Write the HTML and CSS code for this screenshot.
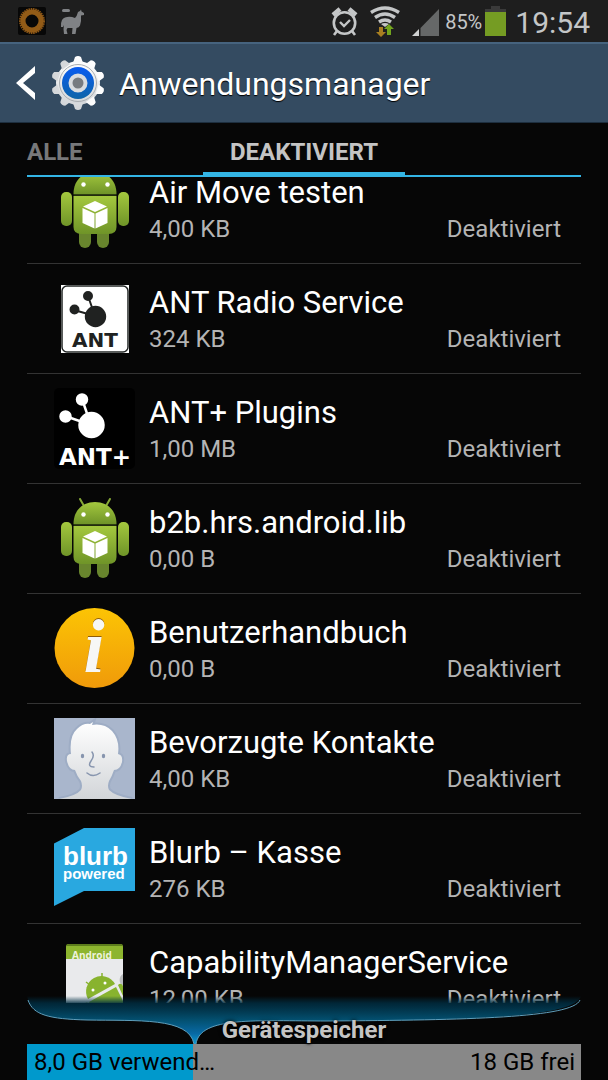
FILE: index.html
```html
<!DOCTYPE html>
<html lang="de">
<head>
    <meta charset="UTF-8">
    <meta name="viewport" content="width=device-width, initial-scale=1.0">
    <title>Anwendungsmanager</title>
    <link rel="stylesheet" href="styles.css">
</head>
<body>
    <!-- Shared shapes -->
    <svg class="defs" aria-hidden="true">
        <defs>
            <linearGradient id="robot-green" x1="0" y1="0" x2="0" y2="1">
                <stop offset="0" stop-color="#a4c83e"/>
                <stop offset="1" stop-color="#6f9428"/>
            </linearGradient>
            <linearGradient id="silver" x1="0" y1="0" x2="0" y2="1">
                <stop offset="0" stop-color="#ffffff"/>
                <stop offset="1" stop-color="#d2d5d8"/>
            </linearGradient>
            <linearGradient id="gear-blue" x1="0" y1="0" x2="0" y2="1">
                <stop offset="0" stop-color="#0a5cf0"/>
                <stop offset="1" stop-color="#0d64a8"/>
            </linearGradient>
            <linearGradient id="orange" x1="0" y1="0" x2="0" y2="1">
                <stop offset="0" stop-color="#fcc404"/>
                <stop offset="1" stop-color="#f09a0a"/>
            </linearGradient>
            <linearGradient id="funnel" x1="0" y1="0" x2="0" y2="1">
                <stop offset="0" stop-color="#003044" stop-opacity="0"/>
                <stop offset="0.15" stop-color="#002c40" stop-opacity="0.85"/>
                <stop offset="0.5" stop-color="#035070"/>
                <stop offset="0.78" stop-color="#0869a4"/>
                <stop offset="1" stop-color="#0a9bd4"/>
            </linearGradient>
            <symbol id="robot" viewBox="0 0 81 81">
                <path d="M30 8 26 1M52 8l4-7" stroke="#86a936" stroke-width="2" stroke-linecap="round"/>
                <path d="M19.500 26C19.500 12 29 4 41 4s21.500 8 21.500 22z" fill="url(#robot-green)"/>
                <rect x="7" y="24" width="11" height="34" rx="5" fill="url(#robot-green)"/>
                <rect x="64" y="24" width="11" height="34" rx="5" fill="url(#robot-green)"/>
                <rect x="25" y="58" width="12" height="22" rx="6" fill="#68852d"/>
                <rect x="43" y="58" width="12" height="22" rx="6" fill="#68852d"/>
                <path d="M19.500 28h43v31q0 7-8 7h-27q-8 0-8-7z" fill="url(#robot-green)"/>
                <path d="M19.500 26.800h43" stroke="#3c5216" stroke-width="1.300"/>
                <circle cx="29.500" cy="16.500" r="2.200" fill="#fff"/>
                <circle cx="53.500" cy="16.500" r="2.200" fill="#fff"/>
                <path d="M41 33l12 5.500-12 5.500-12-5.500zM28.500 40l12 5.500v15l-12-5.500zM53.500 40l-12 5.500v15l12-5.500z" fill="#fff"/>
            </symbol>
        </defs>
    </svg>

    <!-- Status bar -->
    <div class="status-bar">
        <svg class="status-sun" viewBox="0 0 28 28" width="28" height="28">
            <rect width="28" height="28" rx="2" fill="#070707"/>
            <circle cx="14" cy="14" r="10.500" fill="none" stroke="#8a5516" stroke-width="5" stroke-dasharray="1.400 0.600"/>
            <circle cx="14" cy="14" r="9" fill="none" stroke="#925b17" stroke-width="5"/>
        </svg>
        <svg class="status-llama" viewBox="0 0 24 25" width="24" height="25">
            <rect x="2" y="0" width="8" height="3" rx="1.500" fill="#808285"/>
            <path fill="#808285" d="M2 11Q3 9 5 8.500q5-1.500 10 .500 2-2 3-6l2-1 1-1.500.500 2 2.500 1.500v2l-3 .500q.500 6-1 10-1 2-3.500 2.500L15.500 25H12l.500-6h-5l-1 2 1 4H4l-.500-5 .500-4-1 2H1q-.500-4 1-7z"/>
        </svg>
        <span class="spacer"></span>
        <svg viewBox="0 0 27 29" width="27" height="29" fill="none" stroke="#c4c6c7">
            <circle cx="13.500" cy="16" r="10.700" stroke-width="2.600"/>
            <path d="M9 15l4 4 6-6" stroke-width="2.400"/>
            <path d="M2 8l7-6M25 8l-7-6" stroke-width="4.500"/>
            <path d="M6 24l-3 4M21 24l3 4" stroke-width="2.600"/>
        </svg>
        <svg class="status-wifi" viewBox="0 0 30 31" width="30" height="31">
            <g fill="none" stroke="#c4c6c7" stroke-width="3.400">
                <path d="M1 6.500q14-9 28 0M5 11.500q10-7 20 0M9 16q6-4 12 0"/>
            </g>
            <path d="M11 18q4-2 8 0l-4 3z" fill="#c4c6c7"/>
            <path d="M9 21h4v5h3l-5 5-5-5h3z" fill="#a87f21"/>
            <path d="M17 29v-6h-3l5-5 5 5h-3v6z" fill="#72a41d"/>
        </svg>
        <svg class="status-signal" viewBox="0 0 27 27" width="27" height="27">
            <path d="M27 0v27H8.500V19z" fill="#666868"/>
            <path d="M0 27l7-7v7z" fill="#d0d2d2"/>
        </svg>
        <span class="battery-level">85%</span>
        <svg class="battery" viewBox="0 0 21 30" width="21" height="30">
            <path d="M6 0h9v3h6v3H0V3h6z" fill="#3a3a3a"/>
            <rect y="6" width="21" height="24" fill="#759c23"/>
        </svg>
        <time class="clock">19:54</time>
    </div>

    <!-- Title bar -->
    <header class="title-bar">
        <button class="back" type="button" aria-label="Zurück">
            <svg viewBox="0 0 19 34" width="19" height="34">
                <path d="M19 0v7l-12 10 12 10v7L0 17z" fill="#fff"/>
            </svg>
        </button>
        <svg viewBox="0 0 54 54" width="54" height="54">
            <g fill="url(#silver)">
                <circle cx="27" cy="27" r="22"/>
                <path d="M22 7l2-6q3-2 6 0l2 6zM22 47l2 6q3 2 6 0l2-6z"/>
                <path d="M22 7l2-6q3-2 6 0l2 6zM22 47l2 6q3 2 6 0l2-6z" transform="rotate(36 27 27)"/>
                <path d="M22 7l2-6q3-2 6 0l2 6zM22 47l2 6q3 2 6 0l2-6z" transform="rotate(72 27 27)"/>
                <path d="M22 7l2-6q3-2 6 0l2 6zM22 47l2 6q3 2 6 0l2-6z" transform="rotate(108 27 27)"/>
                <path d="M22 7l2-6q3-2 6 0l2 6zM22 47l2 6q3 2 6 0l2-6z" transform="rotate(144 27 27)"/>
            </g>
            <circle cx="27" cy="27" r="18.500" fill="none" stroke="#a9adb1"/>
            <circle cx="27" cy="27" r="16" fill="url(#gear-blue)"/>
            <circle cx="27" cy="27" r="7.500" fill="#777b80" stroke="#d9dcdf" stroke-width="4"/>
        </svg>
        <h1>Anwendungsmanager</h1>
    </header>

    <!-- Tabs -->
    <nav class="tabs">
        <a class="tab" href="#alle">ALLE</a>
        <a class="tab active" href="#deaktiviert" aria-current="page">DEAKTIVIERT</a>
    </nav>

    <!-- App list -->
    <main class="list-view">
        <ul class="app-list">
            <li class="app">
                <svg class="app-icon"><use href="#robot"/></svg>
                <div class="app-text">
                    <h2>Air Move testen</h2>
                    <p><span>4,00 KB</span><span>Deaktiviert</span></p>
                </div>
            </li>
            <li class="app">
                <svg class="app-icon" viewBox="0 0 81 81">
                    <rect x="7" y="7" width="68" height="68" fill="#fff"/>
                    <rect x="8" y="8" width="66" height="66" rx="5" fill="#fff" stroke="#222625" stroke-width="1.500"/>
                    <g fill="#202221" stroke="#202221" stroke-width="2">
                        <path d="M34 18l7 20-21-6" fill="none"/>
                        <circle cx="34" cy="18" r="4"/>
                        <circle cx="20.500" cy="31.500" r="4"/>
                        <circle cx="41.500" cy="38.500" r="9.700"/>
                    </g>
                    <text class="ant-text" x="41" y="69" fill="#202221">ANT</text>
                </svg>
                <div class="app-text">
                    <h2>ANT Radio Service</h2>
                    <p><span>324 KB</span><span>Deaktiviert</span></p>
                </div>
            </li>
            <li class="app">
                <svg class="app-icon" viewBox="0 0 81 81">
                    <rect width="81" height="81" rx="5" fill="#000"/>
                    <g fill="#fff" stroke="#fff" stroke-width="2.500">
                        <path d="M28 11l9 26-26-9" fill="none"/>
                        <circle cx="28" cy="11.500" r="5"/>
                        <circle cx="11.500" cy="28.500" r="5"/>
                        <circle cx="37.500" cy="37" r="12"/>
                    </g>
                    <text class="ant-plus-text" x="41" y="77" fill="#fff">ANT+</text>
                </svg>
                <div class="app-text">
                    <h2>ANT+ Plugins</h2>
                    <p><span>1,00 MB</span><span>Deaktiviert</span></p>
                </div>
            </li>
            <li class="app">
                <svg class="app-icon"><use href="#robot"/></svg>
                <div class="app-text">
                    <h2>b2b.hrs.android.lib</h2>
                    <p><span>0,00 B</span><span>Deaktiviert</span></p>
                </div>
            </li>
            <li class="app">
                <svg class="app-icon" viewBox="0 0 81 81">
                    <circle cx="40.500" cy="40" r="40" fill="url(#orange)"/>
                    <text class="info-text" x="40" y="64">i</text>
                </svg>
                <div class="app-text">
                    <h2>Benutzerhandbuch</h2>
                    <p><span>0,00 B</span><span>Deaktiviert</span></p>
                </div>
            </li>
            <li class="app">
                <svg class="app-icon" viewBox="0 0 81 81">
                    <rect width="81" height="81" fill="#a9b6cc"/>
                    <path d="M5 81q17-3 22-9 2-4 0-9-4-5-6-11-6 0-8-9-1-7 4-7-2-18 6-25Q29 5 36 6l3-2-1 3q12-2 20 6 8 9 6 23 5 1 4 8-2 8-8 8-2 6-5 11-2 5 0 9 6 6 23 9z" fill="url(#silver)" stroke="#98a6c0" stroke-width="4" stroke-opacity="0.6" paint-order="stroke"/>
                    <ellipse cx="28.500" cy="38" rx="1.700" ry="2.300" fill="#8795ae"/>
                    <ellipse cx="49.500" cy="38" rx="1.700" ry="2.300" fill="#8795ae"/>
                    <path d="M38 34q3 4-1 9-4 6 3 6M33 55q6 5 13 0" fill="none" stroke="#8795ae" stroke-width="1.500" stroke-linecap="round"/>
                </svg>
                <div class="app-text">
                    <h2>Bevorzugte Kontakte</h2>
                    <p><span>4,00 KB</span><span>Deaktiviert</span></p>
                </div>
            </li>
            <li class="app">
                <svg class="app-icon" viewBox="0 0 81 81">
                    <path d="M0 15.500L30 0h51v63H30L0 78z" fill="#29a8e0"/>
                    <text class="blurb-text" x="9" y="37">blurb</text>
                    <text class="powered-text" x="9" y="51">powered</text>
                </svg>
                <div class="app-text">
                    <h2>Blurb – Kasse</h2>
                    <p><span>276 KB</span><span>Deaktiviert</span></p>
                </div>
            </li>
            <li class="app">
                <svg class="app-icon" viewBox="0 0 81 81">
                    <rect x="12" y="6" width="57" height="69" rx="3" fill="#8db52f"/>
                    <path d="M12 8q0-2 3-2h51q3 0 3 2z" fill="#5d7d1c"/>
                    <text class="package-text" x="18" y="21">Android</text>
                    <rect x="12" y="21" width="57" height="54" fill="#e9eaec"/>
                    <path d="M69 36a7 7 0 0 0 0 12z" fill="#b9bbbd"/>
                    <g fill="#88b32e">
                        <path d="M34 61a15 15 0 0 1 27-15z"/>
                        <path d="M35 64l27-15 7 14v12H40z"/>
                        <path d="M64 47q3-3 5 1v10z"/>
                        <path d="M29 67q4-5 7 0l4 8H30z"/>
                    </g>
                    <path d="M48 35v6M32 44l4 3" stroke="#88b32e" stroke-width="1.500"/>
                    <circle cx="39" cy="52" r="1.500" fill="#fff"/>
                    <circle cx="51" cy="45" r="1.500" fill="#fff"/>
                </svg>
                <div class="app-text">
                    <h2>CapabilityManagerService</h2>
                    <p><span>12,00 KB</span><span>Deaktiviert</span></p>
                </div>
            </li>
        </ul>
    </main>

    <!-- Storage -->
    <footer class="storage">
        <div class="storage-head">
            <svg class="funnel" viewBox="0 0 554 48" preserveAspectRatio="none">
                <path d="M0 0C4 18 20 23 60 24C110 25 162 21 167 48H169C173 20 230 25 300 25C440 24 548 22 554 0z" fill="url(#funnel)"/>
                <path d="M1 4C6 19 22 23 60 24C110 25 162 21 167 48M169 48C173 20 230 25 300 25C440 24 546 22 553 4" fill="none" stroke="#5f9fbc"/>
            </svg>
            <h3>Gerätespeicher</h3>
        </div>
        <div class="storage-bar">
            <span class="used">8,0 GB verwend…</span>
            <span class="free">18 GB frei</span>
        </div>
    </footer>
</body>
</html>
```

FILE: styles.css
```css
/* General Styles */
* {
    box-sizing: border-box;
}
body, html {
    margin: 0;
    padding: 0;
    height: 100%;
}
body {
    display: flex;
    flex-direction: column;
    overflow: hidden;
    font-family: Roboto, sans-serif;
    background: #060606;
    color: #fff;
}
h1, h2, h3, p, ul {
    margin: 0;
    padding: 0;
    font-weight: normal;
}
svg {
    flex: none;
    display: block;
}
.defs {
    position: absolute;
    width: 0;
    height: 0;
}

/* Status Bar */
.status-bar {
    flex: none;
    display: flex;
    align-items: center;
    height: 42px;
    padding: 0 18px;
    background: #1e1e1e;
    color: #c4c6c7;
}
.status-llama {
    margin-left: 14px;
}
.spacer {
    flex: 1;
}
.status-wifi {
    margin-left: 12px;
}
.status-signal {
    margin: 2px 6px 0 12px;
}
.battery-level {
    font-size: 20px;
    padding-top: 2px;
}
.battery {
    margin-left: 3px;
}
.clock {
    margin-left: 9px;
    font-size: 30px;
    line-height: 40px;
    padding-top: 4px;
}

/* Title Bar */
.title-bar {
    flex: none;
    display: flex;
    align-items: center;
    height: 81px;
    padding-left: 16px;
    background: #344b61;
    border-top: 2px solid #46637e;
    border-bottom: 1px solid #1d2e3e;
}
.back {
    padding: 0;
    margin-right: 16px;
    background: none;
    border: none;
    cursor: pointer;
}
.title-bar h1 {
    margin-left: 14px;
    font-size: 32px;
    line-height: 40px;
    padding-top: 2px;
    text-shadow: 0 1px 1px #000;
}

/* Tabs */
.tabs {
    flex: none;
    display: grid;
    grid-template-columns: 1fr auto 1fr;
    height: 54px;
    margin: 0 27px;
    border-bottom: 2px solid #33b5e5;
}
.tab {
    height: 54px;
    font-size: 24px;
    font-weight: bold;
    line-height: 58px;
    color: #77787a;
    text-decoration: none;
}
.tab.active {
    padding: 0 27px;
    color: #c4c4c4;
    border-bottom: 5px solid #33b5e5;
}

/* App List */
.list-view {
    flex: 1;
    min-height: 0;
    overflow: hidden;
    padding: 0 27px;
}
.app-list {
    margin-top: -23px;
    list-style: none;
}
.app {
    display: flex;
    align-items: center;
    gap: 14px;
    height: 110px;
    padding: 0 20px 0 27px;
    border-bottom: 1px solid #333;
}
.app-icon {
    width: 81px;
    height: 81px;
}
.app-text {
    flex: 1;
    padding-top: 4px;
}
.app-text h2 {
    font-size: 31px;
    line-height: 36px;
    white-space: nowrap;
}
.app-text p {
    display: flex;
    justify-content: space-between;
    font-size: 24px;
    line-height: 36px;
    color: #b4b4b4;
}

/* Icon Lettering */
.ant-text, .ant-plus-text {
    font-family: "DejaVu Sans", sans-serif;
    font-weight: bold;
    font-size: 20px;
    text-anchor: middle;
}
.ant-plus-text {
    font-size: 23px;
}
.info-text {
    font-family: "Liberation Serif", serif;
    font-weight: bold;
    font-style: italic;
    font-size: 76px;
    text-anchor: middle;
    fill: #f7f7f5;
    text-shadow: 0 -1px 0 #8f5c08;
}
.blurb-text, .powered-text {
    font-family: "Liberation Sans", sans-serif;
    font-weight: bold;
    font-size: 26px;
    fill: #fff;
}
.powered-text {
    font-size: 15px;
}
.package-text {
    font-family: "Open Sans", sans-serif;
    font-weight: bold;
    font-size: 10px;
    fill: #eef3dc;
}

/* Storage */
.storage {
    flex: none;
    padding: 0 27px;
}
.storage-head {
    position: relative;
    height: 41px;
}
.funnel {
    position: absolute;
    top: -7px;
    left: 0;
    width: 100%;
    height: 48px;
}
.storage-head h3 {
    position: relative;
    padding-top: 12px;
    font-size: 24px;
    line-height: 30px;
    font-weight: bold;
    text-align: center;
    color: #c4c4c4;
    text-shadow: 0 0 4px #000, 0 1px 2px #000;
}
.storage-bar {
    display: flex;
    justify-content: space-between;
    font-size: 24px;
    line-height: 36px;
    white-space: nowrap;
    background: #888;
    color: #000;
}
.used {
    width: 30%;
    padding-left: 7px;
    background: #0099cc;
}
.free {
    padding-right: 6px;
}
```
